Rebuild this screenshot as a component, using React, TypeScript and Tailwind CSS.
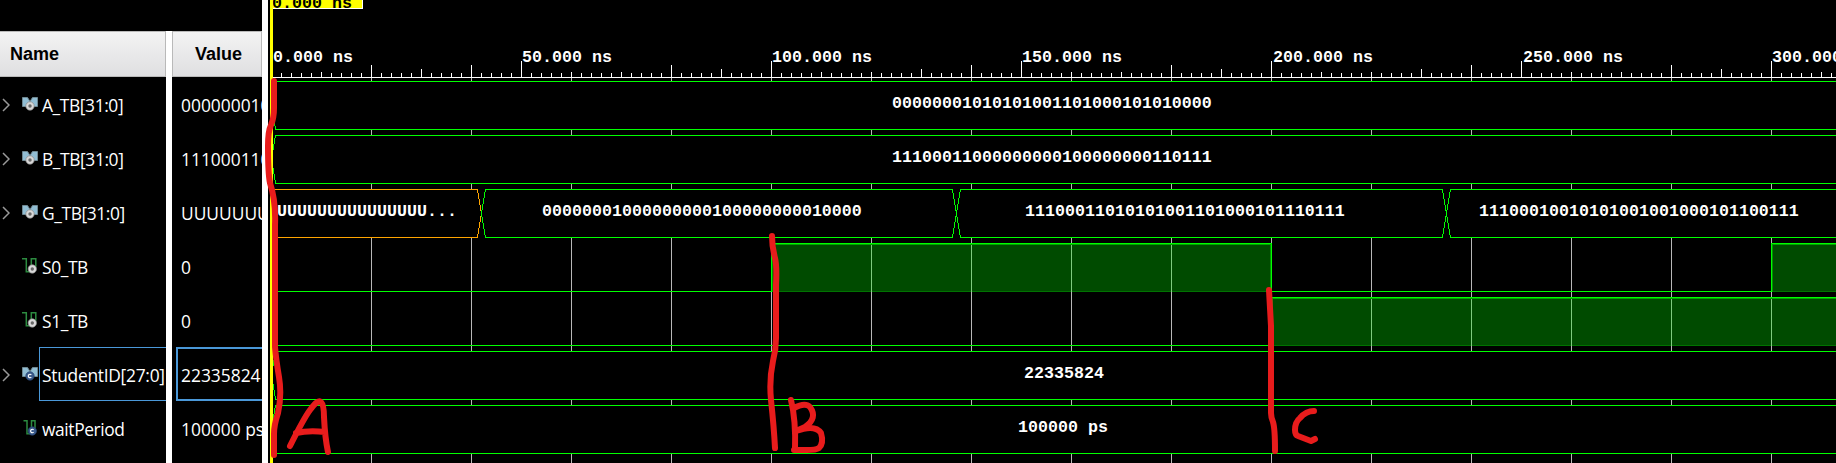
import React from "react";

const ruler = [72, 65, 69, 65, 61, 72, 72, 65, 69, 61, 72, 72, 69, 65, 61, 72, 72, 65, 69, 61, 72, 72, 69, 65, 61, 72, 72, 65, 69, 61, 72];
const ticks = Array.from({ length: 156 }, (_, i) => ({
  x: 281 + i * 10,
  y: (i + 1) % 5 === 0 ? ruler[(i + 1) / 5 - 1] : 73,
}));
const grid = Array.from({ length: 15 }, (_, i) => 371 + i * 100);
const gaps = [[78, 81], [130, 135], [184, 189], [238, 351], [400, 405], [454, 463]];

type Kind = "bus" | "bit";
type Row = { name: string; value: string; kind: Kind; constant?: boolean; selected?: boolean };

const rows: Row[] = [
  { name: "A_TB[31:0]", value: "000000010", kind: "bus" },
  { name: "B_TB[31:0]", value: "111000110", kind: "bus" },
  { name: "G_TB[31:0]", value: "UUUUUUU", kind: "bus" },
  { name: "S0_TB", value: "0", kind: "bit" },
  { name: "S1_TB", value: "0", kind: "bit" },
  { name: "StudentID[27:0]", value: "22335824", kind: "bus", constant: true, selected: true },
  { name: "waitPeriod", value: "100000 ps", kind: "bit", constant: true },
];

const labels: [number, number, string][] = [
  [273, 62, "0.000 ns"], [522, 62, "50.000 ns"], [772, 62, "100.000 ns"], [1022, 62, "150.000 ns"],
  [1273, 62, "200.000 ns"], [1523, 62, "250.000 ns"], [1772, 62, "300.000 ns"],
  [892, 108, "00000001010101001101000101010000"],
  [892, 162, "11100011000000000100000000110111"],
  [277, 216, "UUUUUUUUUUUUUUU..."],
  [542, 216, "00000001000000000100000000010000"],
  [1025, 216, "11100011010101001101000101110111"],
  [1479, 216, "11100010010101001001000101100111"],
  [1024, 378, "22335824"],
  [1018, 432, "100000 ps"],
];

function SignalIcon({ kind, constant }: { kind: Kind; constant?: boolean }) {
  const cx = kind === "bus" ? 8 : 10.3;
  const cy = kind === "bus" ? 10 : 11;
  return (
    <svg className="h-4 w-4 shrink-0" viewBox="0 0 16 16">
      {kind === "bus" ? (
        <path d="M.5 1.500h5l2.500 4 2.500-4h5v9h-3L8 8 4.500 10.500h-4z" fill="#91bdd3" stroke="#6f8791" />
      ) : (
        <path d={constant ? "M1.500.7H5v13h4.500V.7H13v8" : "M0 .7h4.300v13h5V.7h4.500v8"} fill="none" stroke="#2c8b40" strokeWidth="1.500" />
      )}
      <circle cx={cx} cy={cy} r="4.200" fill={constant ? "#3b5b8c" : "#d8d8d8"} stroke={constant ? "#24416f" : "#8a8a8a"} strokeWidth=".7" />
      {constant ? (
        <path d={`M${cx + 1.3} ${cy - 1.1}a1.700 1.700 0 1 0 0 2.200`} fill="none" stroke="#fff" strokeWidth="1.100" />
      ) : (
        <circle cx={cx} cy={cy} r="1.700" fill="#686868" />
      )}
    </svg>
  );
}

function Waves() {
  return (
    <svg className="block h-[463px] w-[1568px]" viewBox="268 0 1568 463">
      <rect x="270" y="-10" width="93" height="19" fill="#fff" />
      <rect x="270" y="-10" width="92" height="18" fill="#ff0" />
      <text x="272" y="8" className="fill-black font-['Liberation_Mono'] text-[16.67px] font-bold">0.000 ns</text>
      <g shapeRendering="crispEdges">
        <rect x="273" y="77" width="1563" height="1" fill="#fff" />
        {ticks.map((t) => <rect key={t.x} x={t.x} y={t.y} width="1" height={77 - t.y} fill="#fff" />)}
        {grid.map((x) => gaps.map(([a, b]) => <rect key={`${x}-${a}`} x={x} y={a} width="1" height={b - a} fill="#b8b8b8" />))}
        {[[772, 243, 499], [1272, 297, 564], [1772, 243, 64]].map(([x, y, w]) => (
          <g key={`${x}-${y}`}>
            <rect x={x} y={y} width={w} height="49" fill="#004b00" />
            <rect x={x} y={y + 48} width={w} height="1" fill="#007300" />
            {grid.filter((g) => g > x && g < x + w).map((g) => <rect key={g} x={g} y={y} width="1" height="49" fill="#7fcc7f" />)}
            <rect x={x} y={y + 1} width={w} height="1" fill="#00a500" />
            <rect x={x} y={y} width={w} height="1" fill="#0f0" />
          </g>
        ))}
        {[772, 1772].map((x) => <rect key={x} x={x} y="244" width="1" height="48" fill="#009300" />)}
        <rect x="1270" y="244" width="1" height="48" fill="#009300" />
        <rect x="1272" y="298" width="1" height="48" fill="#009300" />
        <g fill="#0f0">
          {[81, 129, 135, 183, 351, 399, 405, 453].map((y) => <rect key={y} x="275" y={y} width="1561" height="1" />)}
          {[189, 237].map((y) => (
            <g key={y}>
              <rect x="485" y={y} width="468" height="1" />
              <rect x="960" y={y} width="483" height="1" />
              <rect x="1450" y={y} width="386" height="1" />
            </g>
          ))}
          <rect x="273" y="291" width="499" height="1" />
          <rect x="1271" y="291" width="501" height="1" />
          <rect x="273" y="345" width="999" height="1" />
          <rect x="771" y="243" width="1" height="49" />
          <rect x="1271" y="243" width="1" height="49" />
          <rect x="1271" y="297" width="1" height="49" />
          <rect x="1771" y="243" width="1" height="49" />
        </g>
        <path d="M273 189.500H477.500L481.500 213.500L477.500 237.500H273" fill="none" stroke="#ffa500" />
        <path d="M485.500 189.500L481.500 213.500L485.500 237.500M952.500 189.500L960.500 237.500M960.500 189.500L952.500 237.500M1442.500 189.500L1450.500 237.500M1450.500 189.500L1442.500 237.500" fill="none" stroke="#0f0" />
        {[81, 135, 351, 405].map((y) => <path key={y} d={`M275.500 ${y}L271.500 ${y + 24}L275.500 ${y + 48}`} fill="none" stroke="#0f0" />)}
        <rect x="270" y="0" width="3" height="463" fill="#ff0" />
      </g>
      {labels.map(([x, y, text]) => (
        <text key={`${x}-${y}`} x={x} y={y} className="fill-white font-['Liberation_Mono'] text-[16.67px] font-bold">{text}</text>
      ))}
    </svg>
  );
}

function Annotations() {
  return (
    <svg className="pointer-events-none absolute inset-0 h-[463px] w-[1836px]" viewBox="0 0 1836 463" fill="none" stroke="#e81c1c" strokeWidth="6" strokeLinecap="round" strokeLinejoin="round">
      <path d="M274 81L274 108Q274 118 271 125Q268 131 268 146Q268 174 270 183Q276 201 275 225L275 347Q276 359 279 377Q282 395 278 413Q274 425 274 434V455" />
      <path d="M290 446Q304 418 310 410Q318 399 321 402Q324 405 324 417Q325 438 328 452M296 433Q309 430 325 432" />
      <path d="M772 236Q772 247 775 258Q777 266 776 285L776 338Q776 350 773 361Q769 380 771 400Q774 428 775 448" />
      <path d="M791 400Q796 420 795 450M794 408Q805 402 810 407Q818 418 805 427L796 431Q815 424 821 433Q824 443 819 448Q816 450 807 450H794" />
      <path d="M1269 290L1271 326V413Q1271 417 1273 422Q1275 428 1275 451" />
      <path d="M1314 411Q1306 411 1300 418Q1295 422 1295 430Q1295 435 1298 436L1311 441L1315 439" />
    </svg>
  );
}

export default function App() {
  return (
    <main className="relative flex h-[463px] w-[1836px] overflow-hidden bg-black font-['Open_Sans',sans-serif] text-[17.4px] text-white">
      <section className="w-[166px] shrink-0 overflow-hidden pt-[31px]">
        <header className="flex h-[46px] items-center border-y border-r border-[#b9b9b9] bg-linear-to-b from-[#f3f3f3] to-[#dfdfe1] pt-px pl-[10px] font-['Liberation_Sans'] text-[18px] font-bold text-black">Name</header>
        {rows.map((r) => (
          <div key={r.name} className="flex h-[54px] items-center">
            <div className="flex w-[22px] shrink-0 pt-px pl-[2px]">
              {r.kind === "bus" && (
                <svg className="h-3.5 w-2" viewBox="0 0 8 14"><path d="M1 1l6 6-6 6" fill="none" stroke="#999" strokeWidth="1.500" /></svg>
              )}
            </div>
            <SignalIcon kind={r.kind} constant={r.constant} />
            <div className={r.selected ? "ml-px flex h-[54px] w-[130px] shrink-0 items-center border border-r-0 border-[#4a98d8] pt-[2px] pl-[2px] tracking-[-0.28px] whitespace-nowrap" : "ml-px flex h-[54px] w-[130px] shrink-0 items-center border border-transparent pt-[2px] pl-[2px] tracking-[-0.4px] whitespace-nowrap"}>
              {r.name}
            </div>
          </div>
        ))}
      </section>
      <div className="mt-[31px] w-[6px] shrink-0 bg-white" />
      <section className="w-[90px] shrink-0 overflow-hidden pt-[31px]">
        <header className="flex h-[46px] items-center border border-[#b9b9b9] bg-linear-to-b from-[#f3f3f3] to-[#dfdfe1] pt-px pl-[22px] font-['Liberation_Sans'] text-[18px] font-bold text-black">Value</header>
        {rows.map((r) => (
          <div key={r.name} className={r.selected ? "ml-1 flex h-[54px] items-center border-2 border-r-0 border-[#4a98d8] pt-[2px] pl-[3px] whitespace-nowrap" : "ml-1 flex h-[54px] items-center border-2 border-transparent pt-[2px] pl-[3px] whitespace-nowrap"}>
            {r.value}
          </div>
        ))}
      </section>
      <div className="w-[6px] shrink-0 bg-white" />
      <Waves />
      <Annotations />
    </main>
  );
}
